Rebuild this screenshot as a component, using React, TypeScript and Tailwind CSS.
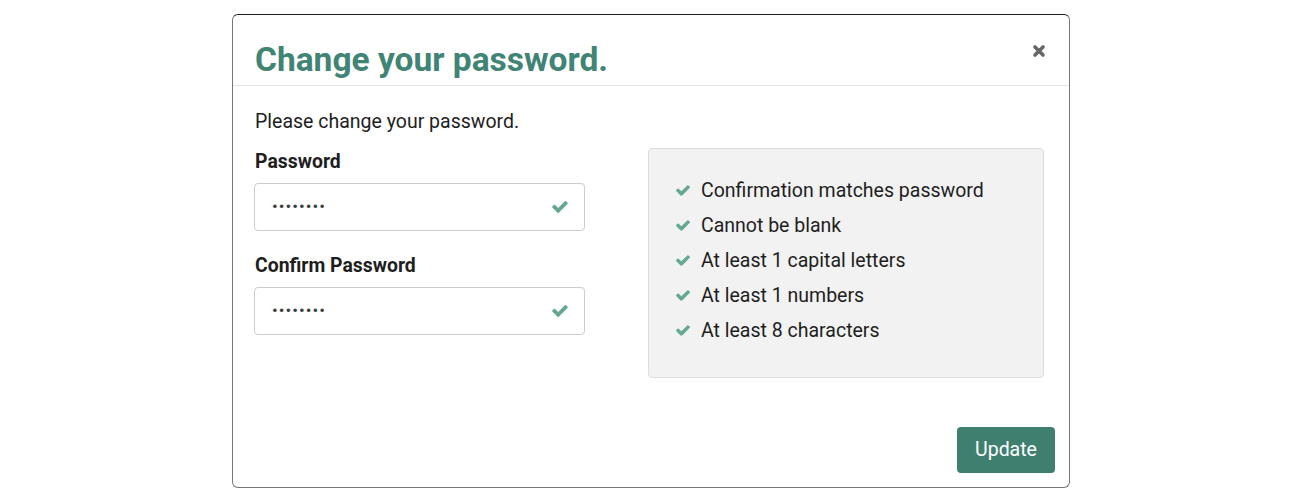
import React from "react";

const CheckIcon = ({ className }: { className?: string }) => (
  <svg viewBox="121 334 1550 1188" className={className} fill="currentColor" aria-hidden="true">
    <path d="M1671 566q0 40-28 68l-724 724-136 136q-28 28-68 28t-68-28l-136-136-362-362q-28-28-28-68t28-68l136-136q28-28 68-28t68 28l294 295 656-657q28-28 68-28t68 28l136 136q28 28 28 68z" />
  </svg>
);

const CloseIcon = () => (
  <svg viewBox="0 0 14 14" className="w-[14px] h-[14px] text-[#666]" aria-hidden="true">
    <path d="M3 3L11 11M11 3L3 11" stroke="currentColor" strokeWidth="3.6" strokeLinecap="round" />
  </svg>
);

const rules = [
  "Confirmation matches password",
  "Cannot be blank",
  "At least 1 capital letters",
  "At least 1 numbers",
  "At least 8 characters",
];

const PasswordField = ({ label, mt }: { label: string; mt: string }) => (
  <div className={mt}>
    <label className="block pl-[1px] font-bold text-[19.4px] leading-[26px] text-[#1e1e1e]">{label}</label>
    <div className="mt-2 h-[48px] flex items-center justify-between border border-[#cccccc] rounded-[4px] pl-[17px] pr-[16px] bg-white">
      <span className="text-[17px] tracking-[1px] text-[#3c3c3c]">••••••••</span>
      <CheckIcon className="w-[16px] h-[12px] text-[#64a891]" />
    </div>
  </div>
);

export default function App() {
  return (
    <div className="min-h-[492px] bg-white font-['Roboto',sans-serif] pt-[14px]">
      <div className="ml-[232px] w-[838px] border border-[#777] border-t-[#1e1e1e] rounded-[6px] bg-white">
        <header className="flex items-start justify-between pl-[22px] pr-[23px] pt-[25px] pb-[5px] border-b border-[#e5e5e5]">
          <h1 className="text-[33.5px] leading-[40px] font-bold text-[#3f8474]">Change your password.</h1>
          <button className="mt-[4px]">
            <CloseIcon />
          </button>
        </header>

        <section className="pl-[21px] pr-[22px] pt-[23px]">
          <p className="pl-[1px] text-[19.5px] leading-[26px] text-[#1e1e1e]">Please change your password.</p>
          <div className="flex mt-[13px]">
            <div className="w-[331px] pt-[1px]">
              <PasswordField label="Password" mt="" />
              <PasswordField label="Confirm Password" mt="mt-[22px]" />
            </div>
            <div className="ml-[63px] w-[396px] bg-[#f2f2f2] border border-[#dddddd] rounded-[4px] pl-[27px] pt-[24px] pb-[29px]">
              <ul>
                {rules.map((r) => (
                  <li key={r} className="flex items-center text-[19.5px] leading-[35px] text-[#1e1e1e]">
                    <CheckIcon className="w-[14px] h-[11px] text-[#64a891] mr-[11px]" />
                    {r}
                  </li>
                ))}
              </ul>
            </div>
          </div>
        </section>

        <footer className="flex justify-end pr-[14px] pt-[49px] pb-[14px]">
          <button className="h-[46px] w-[98px] rounded-[4px] bg-[#3e7f6f] text-white text-[19.5px]">Update</button>
        </footer>
      </div>
    </div>
  );
}
